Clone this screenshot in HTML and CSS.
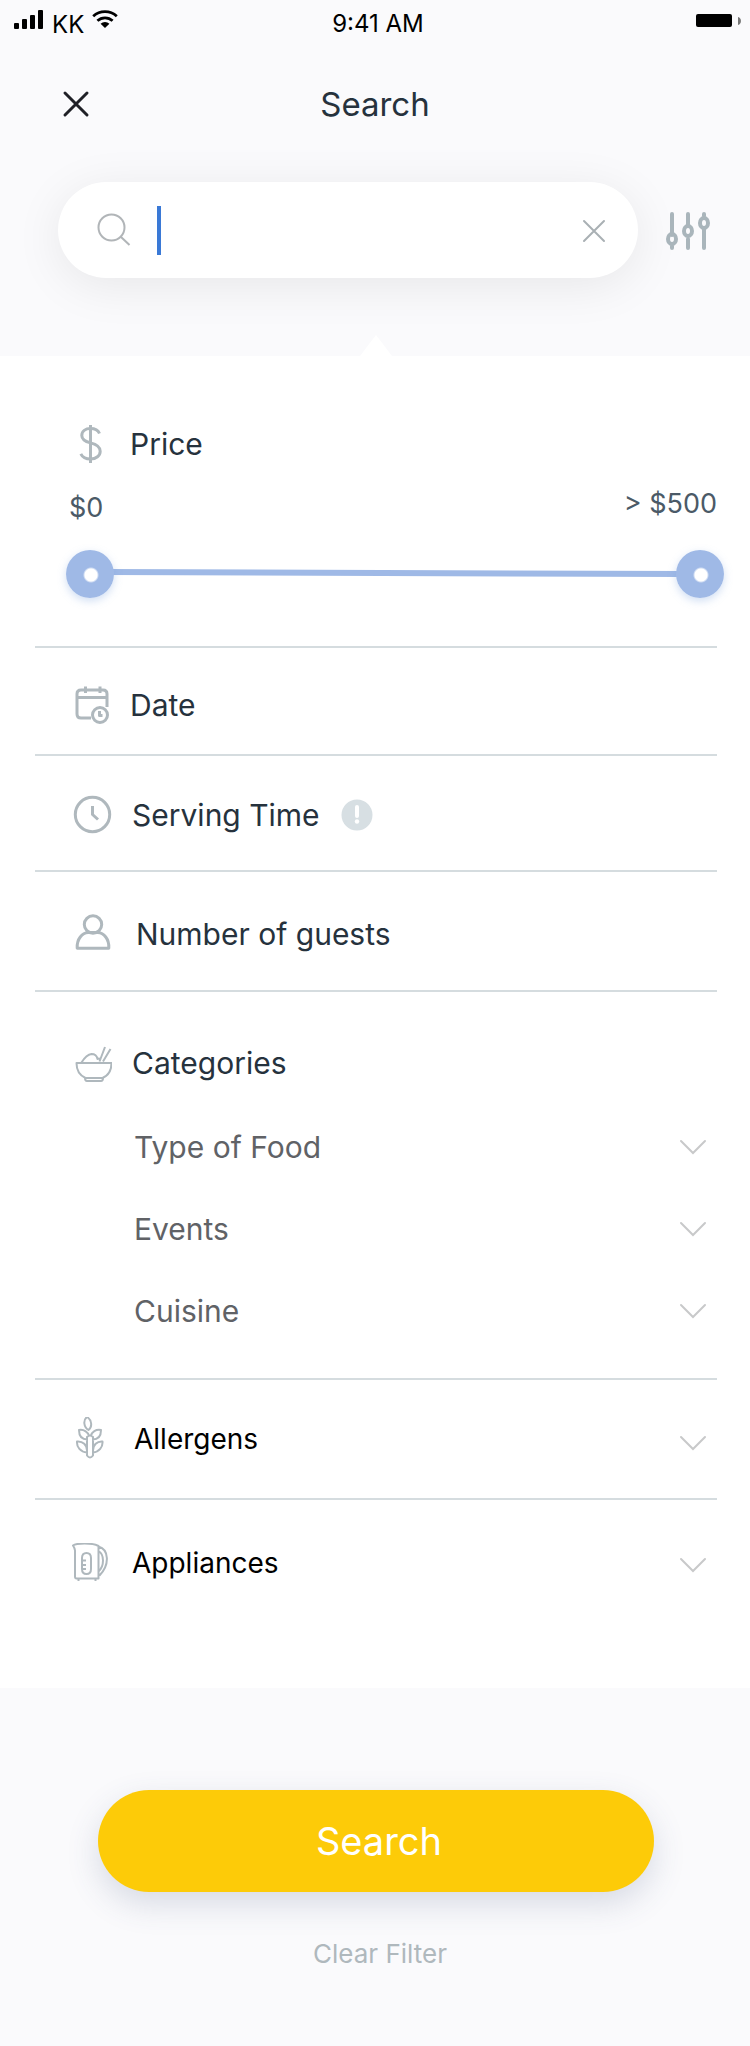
FILE: index.html
```html
<!DOCTYPE html>
<html lang="en">
<head>
<meta charset="utf-8">
<meta name="viewport" content="width=device-width, initial-scale=1">
<title>Search</title>
<link rel="stylesheet" href="styles.css">
</head>
<body>
<form class="screen" action="#">
  <header class="top">
    <div class="status">
      <div class="status-left">
        <svg class="signal" viewBox="0 0 30 20" aria-hidden="true"><rect x="0" y="13" width="5" height="6" rx="1"/><rect x="8" y="9" width="5" height="10" rx="1"/><rect x="16" y="5" width="5" height="14" rx="1"/><rect x="24" y="0" width="5" height="19" rx="1"/></svg>
        <span class="carrier">KK</span>
        <svg class="wifi" viewBox="0 0 26 18" aria-hidden="true"><path d="M1.2 6.2a17.5 17.5 0 0 1 23.6 0M5.4 10.8a11.2 11.2 0 0 1 15.2 0" fill="none" stroke="#000" stroke-width="2.8"/><path d="M8.6 13.8a6.6 6.6 0 0 1 8.8 0L13 18z"/></svg>
      </div>
      <span class="time">9:41 AM</span>
      <svg class="battery" viewBox="0 0 46 14" aria-hidden="true"><rect width="36" height="13" rx="2"/><path d="M42 3a4.200 4.200 0 0 1 0 8z" fill="#777"/></svg>
    </div>
    <nav class="nav">
      <button class="icon-button close" type="button" aria-label="Close"><svg viewBox="0 0 48 48"><path d="M13 13l22 22M35 13L13 35" fill="none" stroke="#1f2026" stroke-width="3" stroke-linecap="round"/></svg></button>
      <h1 class="title">Search</h1>
    </nav>
    <div class="search-row">
      <div class="search-box">
        <svg class="search-icon" viewBox="0 0 40 40" aria-hidden="true"><circle cx="19.500" cy="17.500" r="13"/><path d="M29 27l8.500 8"/></svg>
        <span class="cursor"></span>
        <input class="search-input" type="text" aria-label="Search text">
        <button class="icon-button" type="button" aria-label="Clear text"><svg viewBox="0 0 48 48"><path d="M14 15l20 20M34 15L14 35" fill="none" stroke="#a9b0b4" stroke-width="2" stroke-linecap="round"/></svg></button>
      </div>
      <button class="filter-button" type="button" aria-label="Filters"><svg viewBox="0 0 44 40"><g fill="none" stroke="#a9b5bb" stroke-width="4" stroke-linecap="round"><path d="M6 4v21M6 36v2M22 4v12M22 29v9M38 4v2M38 19v19"/><ellipse cx="6" cy="29" rx="4" ry="5"/><ellipse cx="22" cy="21" rx="4" ry="5"/><ellipse cx="38" cy="13" rx="4" ry="5"/></g></svg></button>
    </div>
  </header>

  <main class="filters">
    <section class="group price">
      <div class="label-row">
        <svg class="icon" viewBox="0 0 40 40" aria-hidden="true"><path d="M18.500 1v38"/><path d="M27.500 9.500C26 6 22.500 4.500 18.500 4.500c-5 0-8.700 2.700-8.700 7 0 4 3 6 8.700 7.400 6.500 1.600 9.700 3.600 9.700 8.300 0 4.500-4 7.800-9.700 7.800-4.500 0-8-1.800-9.700-5.200"/></svg>
        <h2 class="label">Price</h2>
      </div>
      <div class="bounds"><label for="min">$0</label><label class="bound-max" for="max">&gt; $500</label></div>
      <div class="slider">
        <svg class="track" viewBox="0 0 100 10" preserveAspectRatio="none" aria-hidden="true"><path d="M0 0L100 2V8L0 6z"/></svg>
        <input class="range" id="min" type="range" min="0" max="500" value="0">
        <input class="range" id="max" type="range" min="0" max="500" value="500">
      </div>
    </section>

    <button class="group row date" type="button">
      <svg class="icon" viewBox="0 0 40 40" aria-hidden="true"><path d="M19 33H9q-4 0-4-4V9q0-4 4-4H31q4 0 4 4V22M5 12.500H35M13.500 1.500V8M28 1.500V8"/><circle cx="28" cy="30" r="7.500"/><path d="M27.500 26v4.500h3"/></svg>
      <span class="label">Date</span>
    </button>

    <div class="group serving">
      <button class="row" type="button">
        <svg class="icon" viewBox="0 0 40 40" aria-hidden="true"><circle cx="20.500" cy="19.500" r="17.200"/><path d="M20.500 11v8.500l5.500 5"/></svg>
        <span class="label">Serving Time</span>
      </button>
      <button class="info" type="button" aria-label="About serving time"><svg viewBox="0 0 32 32"><circle cx="16" cy="16" r="15.500" fill="#d7dfe3"/><path d="M16 8v9" stroke="#fff" stroke-width="4" stroke-linecap="round"/><circle cx="16" cy="22.500" r="2.200" fill="#fff"/></svg></button>
    </div>

    <button class="group row guests" type="button">
      <svg class="icon" viewBox="0 0 40 40" aria-hidden="true"><circle cx="21" cy="10.500" r="8.700"/><path d="M5.200 34.200c-.5-9.500 5-15.200 11-15.600h9.600c6 .4 11.500 6.100 11 15.600z"/></svg>
      <span class="label">Number of guests</span>
    </button>

    <section class="group categories">
      <div class="label-row">
        <svg class="icon thin" viewBox="0 0 40 40" aria-hidden="true"><path d="M4.500 20H39.500C39.500 28 36 32.500 30.500 35H13.500C8 32.500 4.500 28 4.500 20zM13 35q0 3 2 3h14q2 0 2-3M9.500 19.500q5-8 10-8.500 5 0 6 5 1.500-1 3 .5M27.500 18.500L33 4M31 18.500L38.500 6"/></svg>
        <h2 class="label">Categories</h2>
      </div>
      <ul class="sub-list">
        <li><button class="row sub" type="button"><span class="label">Type of Food</span><svg class="chevron" viewBox="0 0 28 24"><path d="M2 6l12 12L26 6"/></svg></button></li>
        <li><button class="row sub" type="button"><span class="label">Events</span><svg class="chevron" viewBox="0 0 28 24"><path d="M2 6l12 12L26 6"/></svg></button></li>
        <li><button class="row sub" type="button"><span class="label">Cuisine</span><svg class="chevron" viewBox="0 0 28 24"><path d="M2 6l12 12L26 6"/></svg></button></li>
      </ul>
    </section>

    <button class="group row dark allergens" type="button">
      <svg class="icon thin" viewBox="0 0 40 44" aria-hidden="true"><path d="M15 0c5 3 5.500 10 1.500 13-5-3-5.500-10-1.500-13zM15.500 22.500C10 22.500 7 19 7 13c5-1 9.500 2.500 10 6M19 19c.5-4 5-7 10-6 0 6-3 9.500-8.500 9.500M15 35.500C8.500 35 4.500 30 5 24.500c6-.5 10 3.500 10 9M21 33.500c0-5.500 4-9.500 9.500-9 .5 5.500-3.500 10.500-9.500 11M15 38.500V20q3-3 6 0V38.500q-3 4-6 0z"/></svg>
      <span class="label">Allergens</span>
      <svg class="chevron" viewBox="0 0 28 24"><path d="M2 10l12 12L26 10"/></svg>
    </button>

    <button class="group row dark appliances" type="button">
      <svg class="icon thin" viewBox="0 0 40 40" aria-hidden="true"><path d="M1 2.500C4 0 20-.5 26.500 3V35.500H4.500q-1.500 0-1.500-2V7.500q0-2-2-5zM6.500 36v2M23.500 36v2M26.500 3.500c10.500 3 11.500 18 1 29M26.500 8c6 3.500 6 15 0 20.500M14.500 10q4.500 0 4.500 5v11q0 5-4.500 5t-4.500-5V15q0-5 4.500-5zM10.500 17.500h3.500M10.500 22h3.500M10.500 26h3.500"/></svg>
      <span class="label">Appliances</span>
      <svg class="chevron" viewBox="0 0 28 24"><path d="M2 8l12 12L26 8"/></svg>
    </button>
  </main>

  <footer class="actions">
    <button class="submit" type="submit">Search</button>
    <button class="reset" type="reset">Clear Filter</button>
  </footer>
</form>
</body>
</html>
```

FILE: styles.css
```css
* {
  box-sizing: border-box;
}

body {
  margin: 0;
  background: #fafafc;
  color: #26323d;
  font-family: Inter, "Liberation Sans", sans-serif;
  font-size: 30px;
  line-height: 40px;
}

h1,
h2,
ul {
  margin: 0;
  padding: 0;
  font-size: inherit;
  font-weight: 400;
  list-style: none;
}

button {
  padding: 0;
  border: 0;
  background: none;
  color: inherit;
  font: inherit;
  text-align: left;
  cursor: pointer;
}

svg {
  display: block;
  flex: none;
}

.top {
  position: relative;
  padding-bottom: 78px;
}

.top::after {
  content: "";
  position: absolute;
  bottom: 0;
  left: 50%;
  margin-left: -15px;
  border: solid transparent;
  border-width: 0 16px 21px;
  border-bottom-color: #fff;
}

.status {
  display: grid;
  grid-template-columns: 1fr auto 1fr;
  align-items: start;
  height: 44px;
  padding: 10px 8px 0 14px;
  color: #000;
  font-size: 24px;
  line-height: 28px;
}

.status-left {
  display: flex;
  gap: 8px;
}

.signal {
  width: 30px;
  height: 20px;
}

.carrier {
  padding-top: 1px;
}

.wifi {
  width: 26px;
  height: 18px;
}

.battery {
  justify-self: end;
  width: 46px;
  height: 14px;
  margin-top: 4px;
}

.nav {
  display: grid;
  grid-template-columns: 1fr auto 1fr;
  align-items: center;
  height: 120px;
  padding: 0 52px;
}

.title {
  font-size: 33px;
}

.icon-button {
  width: 48px;
  height: 48px;
}

.search-row {
  display: flex;
  align-items: center;
  gap: 28px;
  padding: 18px 40px 0 58px;
}

.search-box {
  display: flex;
  flex: 1;
  align-items: center;
  min-width: 0;
  height: 96px;
  padding: 0 20px 0 34px;
  border-radius: 48px;
  background: #fff;
  box-shadow: 0 8px 48px rgba(0, 0, 0, 0.08);
}

.search-icon {
  width: 40px;
  height: 40px;
  fill: none;
  stroke: #b1b5b8;
  stroke-width: 2;
}

.cursor {
  width: 4px;
  height: 49px;
  margin-left: 25px;
  background: #3a79d6;
}

.search-input {
  flex: 1;
  min-width: 0;
  height: 56px;
  padding: 0 8px;
  border: 0;
  outline: 0;
  background: transparent;
  font: inherit;
}

.filter-button {
  width: 44px;
  height: 40px;
}

.filters {
  padding: 0 33px 0 35px;
  background: #fff;
}

.group {
  width: 100%;
  border-bottom: 2px solid #d5dcdf;
}

.label-row,
.row {
  display: flex;
  align-items: center;
  gap: 20px;
  padding-left: 37px;
}

.icon {
  width: 40px;
  height: 40px;
  fill: none;
  stroke: #afb8bd;
  stroke-width: 3;
  stroke-linejoin: round;
}

.thin {
  stroke-width: 2;
}

.price {
  padding: 68px 0 48px;
}

.price .label-row {
  gap: 18px;
}

.bounds {
  display: flex;
  justify-content: space-between;
  margin-top: 20px;
  padding: 0 0 0 34px;
  color: #4b5a67;
  font-size: 27px;
}

.bounds label {
  padding-top: 4px;
}

.bounds .bound-max {
  padding-top: 0;
}

.slider {
  display: grid;
  align-items: center;
  margin: 22px -7px 0 31px;
}

.slider > * {
  grid-area: 1 / 1;
}

.track {
  width: 100%;
  height: 10px;
  padding: 0 40px;
  fill: #9fb9e6;
}

.range {
  width: 100%;
  height: 48px;
  margin: 0;
  background: transparent;
  pointer-events: none;
  appearance: none;
}

.range::-webkit-slider-thumb {
  width: 48px;
  height: 48px;
  border-radius: 50%;
  background: radial-gradient(circle at 25px 25px, #fff 6px, #9fb9e6 8px);
  box-shadow: 0 3px 8px rgba(120, 160, 220, 0.35);
  pointer-events: auto;
  appearance: none;
}

.date {
  gap: 18px;
  padding-top: 37px;
  padding-bottom: 29px;
}

.serving {
  display: flex;
  align-items: center;
  gap: 21px;
  padding: 39px 0 35px;
}

.info {
  width: 32px;
  height: 32px;
}

.guests {
  gap: 24px;
  padding-top: 42px;
  padding-bottom: 36px;
}

.categories {
  padding: 51px 0 26px;
}

.sub-list {
  margin-top: 23px;
}

.sub {
  width: 100%;
  height: 82px;
  padding-left: 99px;
  color: #606266;
}

.chevron {
  width: 28px;
  height: 24px;
  margin-right: 10px;
  margin-left: auto;
  fill: none;
  stroke: #c8c9ca;
  stroke-width: 2;
  stroke-linecap: round;
}

.dark {
  color: #000;
  font-size: 28px;
}

.allergens {
  gap: 22px;
  height: 120px;
}

.allergens .icon {
  height: 44px;
}

.appliances {
  padding-top: 43px;
  padding-bottom: 105px;
  border-bottom: 0;
}

.actions {
  display: flex;
  flex-direction: column;
  align-items: center;
  gap: 42px;
  padding: 102px 96px 72px 98px;
}

.submit {
  width: 100%;
  height: 102px;
  padding-left: 6px;
  border-radius: 51px;
  background: #fdcb08;
  box-shadow: 0 12px 32px rgba(60, 75, 120, 0.18);
  color: #fff;
  font-size: 38px;
  text-align: center;
}

.reset {
  padding-left: 8px;
  color: #afb8bd;
  font-size: 26px;
}
```
